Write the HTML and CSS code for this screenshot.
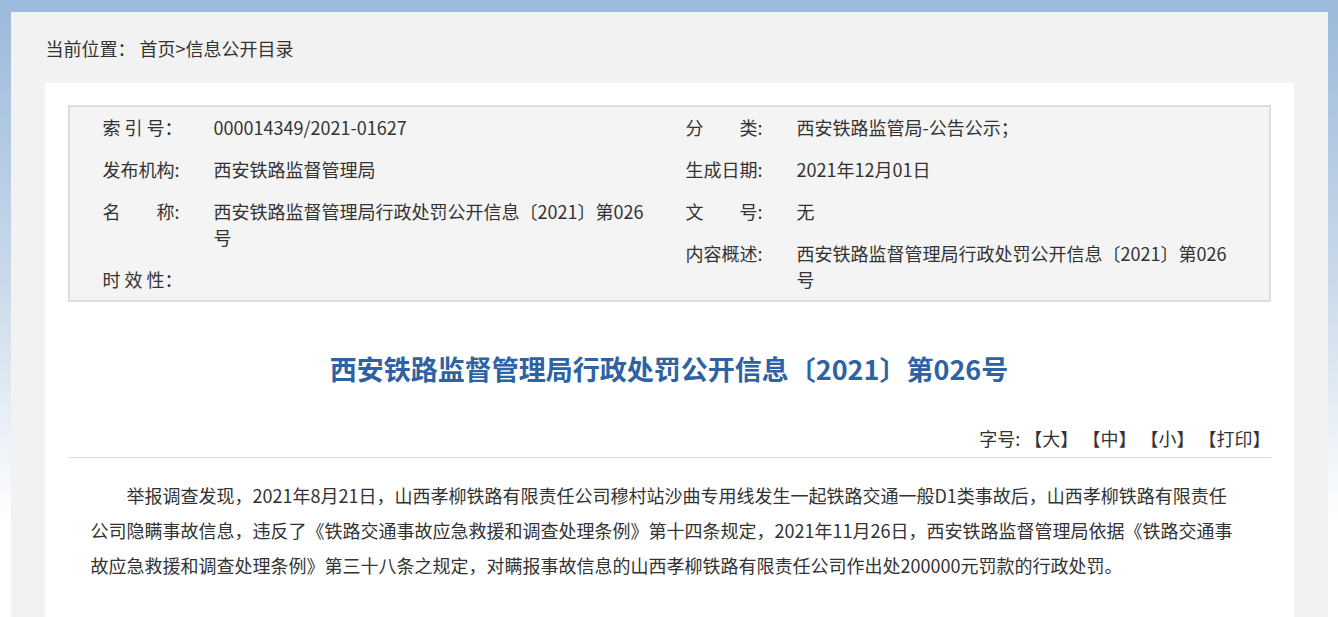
FILE: index.html
```html
<!DOCTYPE html>
<html lang="zh-CN">
<head>
    <meta charset="UTF-8">
    <meta name="viewport" content="width=device-width, initial-scale=1.0">
    <title>西安铁路监督管理局行政处罚公开信息〔2021〕第026号</title>
    <link rel="stylesheet" href="styles.css">
</head>
<body>
<div class="wrap">
    <div class="crumb">当前位置：&nbsp;<a href="#">首页</a>&gt;<a href="#">信息公开目录</a></div>
    <div class="panel">
        <div class="info">
            <div class="info-col">
                <div class="item"><span class="label">索 引 号：</span><span class="value">000014349/2021-01627</span></div>
                <div class="item"><span class="label">发布机构:</span><span class="value">西安铁路监督管理局</span></div>
                <div class="item"><span class="label">名&emsp;&emsp;称:</span><span class="value">西安铁路监督管理局行政处罚公开信息〔2021〕第026号</span></div>
                <div class="item"><span class="label">时 效 性：</span><span class="value"></span></div>
            </div>
            <div class="info-col">
                <div class="item"><span class="label">分&emsp;&emsp;类:</span><span class="value">西安铁路监管局-公告公示；</span></div>
                <div class="item"><span class="label">生成日期:</span><span class="value">2021年12月01日</span></div>
                <div class="item"><span class="label">文&emsp;&emsp;号:</span><span class="value">无</span></div>
                <div class="item"><span class="label">内容概述:</span><span class="value">西安铁路监督管理局行政处罚公开信息〔2021〕第026号</span></div>
            </div>
        </div>
        <h1 class="title">西安铁路监督管理局行政处罚公开信息〔2021〕第026号</h1>
        <div class="tools">字号: <a href="#">【大】</a> <a href="#">【中】</a> <a href="#">【小】</a> <a href="#">【打印】</a></div>
        <div class="article">
            <p>举报调查发现，2021年8月21日，山西孝柳铁路有限责任公司穆村站沙曲专用线发生一起铁路交通一般D1类事故后，山西孝柳铁路有限责任公司隐瞒事故信息，违反了《铁路交通事故应急救援和调查处理条例》第十四条规定，2021年11月26日，西安铁路监督管理局依据《铁路交通事故应急救援和调查处理条例》第三十八条之规定，对瞒报事故信息的山西孝柳铁路有限责任公司作出处200000元罚款的行政处罚。</p>
        </div>
    </div>
</div>
</body>
</html>
```

FILE: styles.css
```css
html, body {
    height: 100%;
}
body {
    margin: 0;
    padding: 12px 0 0;
    box-sizing: border-box;
    font-family: "Microsoft YaHei", "Noto Sans CJK SC", "Noto Sans", sans-serif;
    font-size: 18px;
    color: #333333;
    background: linear-gradient(180deg, #9bb9da 0%, #c9d9ea 45%, #ffffff 85%);
    overflow: hidden;
}
a {
    color: #333333;
    text-decoration: none;
}
.wrap {
    width: 1317px;
    margin: 0 auto;
    background-color: #f2f2f2;
    padding: 0 34px;
    box-sizing: border-box;
    min-height: 100%;
}
.crumb {
    height: 71px;
    line-height: 72px;
    padding-left: 1px;
}
.panel {
    background-color: #ffffff;
    padding: 22px 23px 40px;
    min-height: 600px;
}
.info {
    display: grid;
    grid-template-columns: 556px 1fr;
    column-gap: 27px;
    border: 2px solid #dddddd;
    background-color: #f4f4f4;
    padding: 0 26px 0 33px;
}
.info-col {
    display: flex;
    flex-direction: column;
}
.item {
    display: flex;
    padding: 8px 0;
    line-height: 26px;
}
.item:first-child {
    padding-top: 7px;
}
.label {
    width: 111px;
    flex-shrink: 0;
    white-space: pre;
}
.value {
    flex: 1;
}
.title {
    margin: 47px 0 0;
    text-align: center;
    font-size: 27px;
    line-height: 40px;
    color: #2e62a3;
}
.tools {
    margin-top: 37px;
    padding: 0 0 7px;
    text-align: right;
    line-height: 24px;
    border-bottom: 1px solid #dddddd;
}
.article {
    padding: 20px 36px 0 23px;
}
.article p {
    margin: 0;
    text-indent: 2em;
    line-height: 35px;
}
```
